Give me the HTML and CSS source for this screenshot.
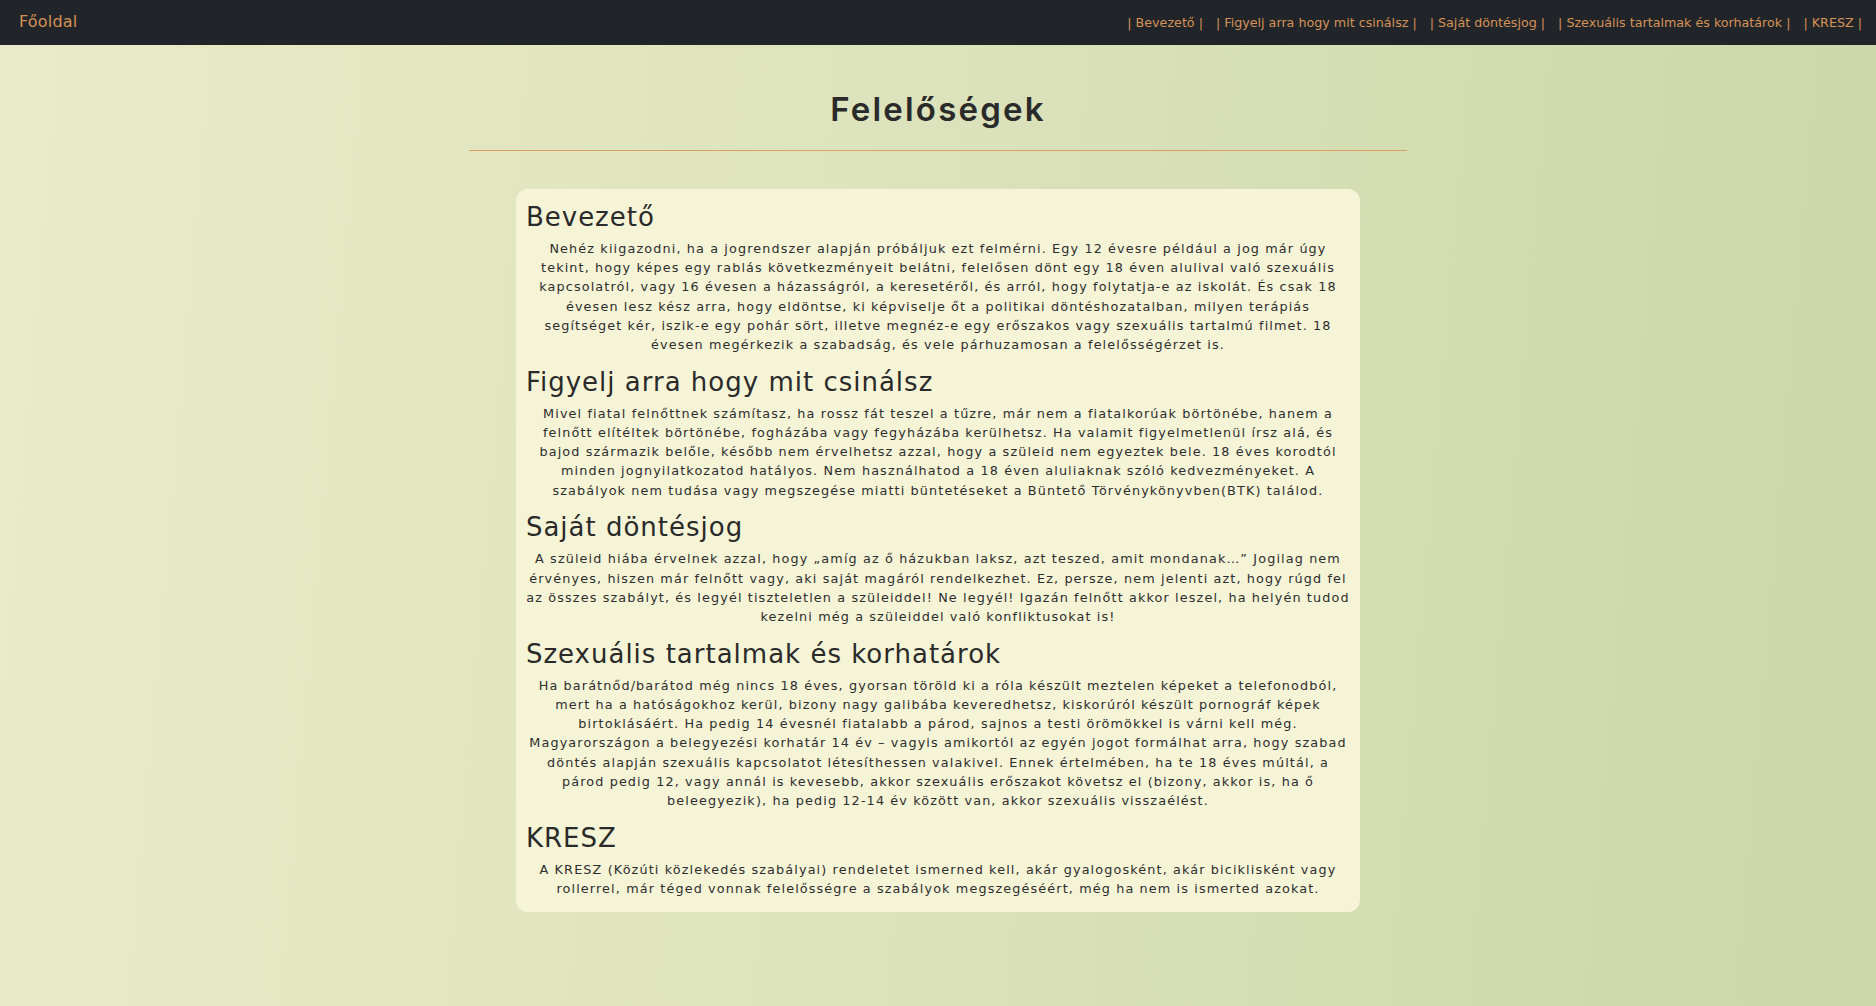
FILE: index.html
```html
<!DOCTYPE html>
<html lang="hu">
<head>
<meta charset="utf-8">
<title>Felelőségek</title>
<link rel="stylesheet" href="styles.css">
</head>
<body>
<nav class="navbar">
  <a class="brand" href="#">Főoldal</a>
  <ul class="links">
    <li><a href="#bevezeto">| Bevezető |</a></li>
    <li><a href="#figyelj">| Figyelj arra hogy mit csinálsz |</a></li>
    <li><a href="#sajat">| Saját döntésjog |</a></li>
    <li><a href="#szexualis">| Szexuális tartalmak és korhatárok |</a></li>
    <li><a href="#kresz">| KRESZ |</a></li>
  </ul>
</nav>
<main class="page">
  <h1 class="title">Felelőségek</h1>
  <hr class="divider">
  <section class="card">
    <h2 id="bevezeto">Bevezető</h2>
    <p>Nehéz kiigazodni, ha a jogrendszer alapján próbáljuk ezt felmérni. Egy 12 évesre például a jog már úgy tekint, hogy képes egy rablás következményeit belátni, felelősen dönt egy 18 éven alulival való szexuális kapcsolatról, vagy 16 évesen a házasságról, a keresetéről, és arról, hogy folytatja-e az iskolát. És csak 18 évesen lesz kész arra, hogy eldöntse, ki képviselje őt a politikai döntéshozatalban, milyen terápiás segítséget kér, iszik-e egy pohár sört, illetve megnéz-e egy erőszakos vagy szexuális tartalmú filmet. 18 évesen megérkezik a szabadság, és vele párhuzamosan a felelősségérzet is.</p>
    <h2 id="figyelj">Figyelj arra hogy mit csinálsz</h2>
    <p>Mivel fiatal felnőttnek számítasz, ha rossz fát teszel a tűzre, már nem a fiatalkorúak börtönébe, hanem a felnőtt elítéltek börtönébe, fogházába vagy fegyházába kerülhetsz. Ha valamit figyelmetlenül írsz alá, és bajod származik belőle, később nem érvelhetsz azzal, hogy a szüleid nem egyeztek bele. 18 éves korodtól minden jognyilatkozatod hatályos. Nem használhatod a 18 éven aluliaknak szóló kedvezményeket. A szabályok nem tudása vagy megszegése miatti büntetéseket a Büntető Törvénykönyvben(BTK) találod.</p>
    <h2 id="sajat">Saját döntésjog</h2>
    <p>A szüleid hiába érvelnek azzal, hogy „amíg az ő házukban laksz, azt teszed, amit mondanak…” Jogilag nem érvényes, hiszen már felnőtt vagy, aki saját magáról rendelkezhet. Ez, persze, nem jelenti azt, hogy rúgd fel az összes szabályt, és legyél tiszteletlen a szüleiddel! Ne legyél! Igazán felnőtt akkor leszel, ha helyén tudod kezelni még a szüleiddel való konfliktusokat is!</p>
    <h2 id="szexualis">Szexuális tartalmak és korhatárok</h2>
    <p>Ha barátnőd/barátod még nincs 18 éves, gyorsan töröld ki a róla készült meztelen képeket a telefonodból, mert ha a hatóságokhoz kerül, bizony nagy galibába keveredhetsz, kiskorúról készült pornográf képek birtoklásáért. Ha pedig 14 évesnél fiatalabb a párod, sajnos a testi örömökkel is várni kell még. Magyarországon a belegyezési korhatár 14 év – vagyis amikortól az egyén jogot formálhat arra, hogy szabad döntés alapján szexuális kapcsolatot létesíthessen valakivel. Ennek értelmében, ha te 18 éves múltál, a párod pedig 12, vagy annál is kevesebb, akkor szexuális erőszakot követsz el (bizony, akkor is, ha ő beleegyezik), ha pedig 12-14 év között van, akkor szexuális visszaélést.</p>
    <h2 id="kresz">KRESZ</h2>
    <p>A KRESZ (Közúti közlekedés szabályai) rendeletet ismerned kell, akár gyalogosként, akár biciklisként vagy rollerrel, már téged vonnak felelősségre a szabályok megszegéséért, még ha nem is ismerted azokat.</p>
  </section>
</main>
</body>
</html>
```
FILE: styles.css
```css
* { box-sizing: border-box; }
html, body { margin: 0; padding: 0; }
body {
  min-height: 1006px;
  font-family: "DejaVu Sans", "Liberation Sans", sans-serif;
  color: #2a2a2a;
  background: linear-gradient(95deg, #e8ecc8 0%, #dde3bd 45%, #ccd6a8 100%);
}
.navbar {
  height: 45px;
  background: #212529;
  display: flex;
  align-items: center;
  justify-content: space-between;
  padding: 0 14px 2px 19px;
}
.brand {
  color: #d59257;
  text-decoration: none;
  font-size: 16px;
  letter-spacing: 0.2px;
}
.links {
  list-style: none;
  margin: 0;
  padding: 0;
  display: flex;
  gap: 13px;
}
.links a {
  color: #d59257;
  text-decoration: none;
  font-size: 12.7px;
  letter-spacing: 0px;
}
.page { padding-top: 45px; }
.title {
  margin: 0;
  text-align: center;
  font-family: Inter, "DejaVu Sans", sans-serif;
  font-size: 33px;
  line-height: 38px;
  font-weight: 600;
  letter-spacing: 2.2px;
  color: #2a2a2a;
}
.divider {
  width: 50%;
  margin: 22px auto 0;
  border: 0;
  border-top: 1px solid #d9a066;
}
.card {
  width: 45%;
  margin: 38px auto 0;
  background: #f6f4d7;
  border-radius: 12px;
  padding: 13px 9px 14px 9px;
}
.card h2 {
  margin: 0 0 6px 1px;
  font-size: 26px;
  line-height: 31px;
  font-weight: 400;
  letter-spacing: 1px;
  color: #2a2a2a;
}
.card p {
  margin: 0 0 12.6px;
  text-align: center;
  font-size: 12.8px;
  line-height: 19.2px;
  letter-spacing: 1.12px;
  color: #2e2e2e;
}
.card p:last-child { margin-bottom: 0; }
```
